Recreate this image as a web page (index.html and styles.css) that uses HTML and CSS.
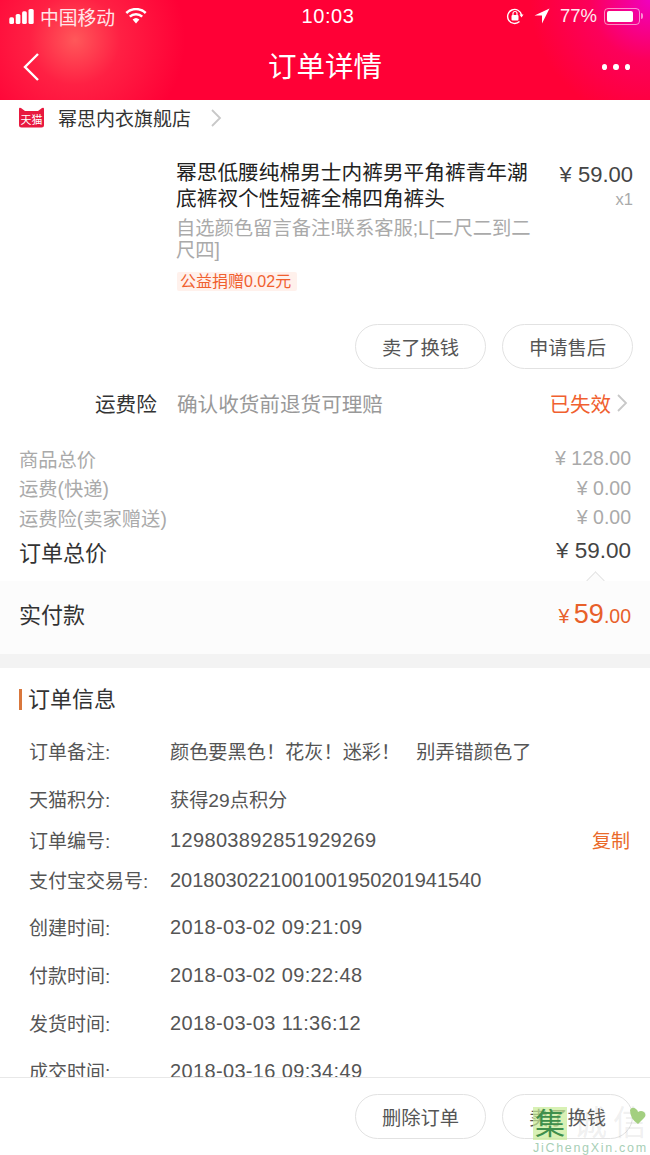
FILE: index.html
```html
<!DOCTYPE html>
<html lang="zh-CN">
<head>
<meta charset="utf-8">
<title>订单详情</title>
<link rel="stylesheet" href="styles.css">
</head>
<body>
<div class="app">
  <header class="header">
    <div class="status">
      <div class="status-left">
        <svg class="signal" width="25" height="15" viewBox="0 0 25 15"><rect x="0.300" y="8.300" width="4.700" height="6.700" rx="1.600" fill="#fff"/><rect x="6.700" y="5" width="4.700" height="10" rx="1.600" fill="#fff"/><rect x="13.100" y="2.300" width="4.700" height="12.700" rx="1.600" fill="#fff"/><rect x="19.500" y="0" width="5.200" height="15" rx="1.600" fill="#fff"/></svg>
        <span class="carrier">中国移动</span>
        <svg class="wifi" width="22" height="16" viewBox="0 0 22 16"><path d="M11 15.500 L7.600 11.500 A5 5 0 0 1 14.400 11.500 Z" fill="#fff"/><path d="M4.800 8.700 A9 9 0 0 1 17.200 8.700" fill="none" stroke="#fff" stroke-width="2.500"/><path d="M1.300 5 A14 14 0 0 1 20.700 5" fill="none" stroke="#fff" stroke-width="2.500"/></svg>
      </div>
      <span class="time">10:03</span>
      <div class="status-right">
        <svg class="lock" width="18" height="18" viewBox="0 0 18 18"><path d="M15.500 8 A7 7 0 1 0 13.500 14.500" fill="none" stroke="#fff" stroke-width="1.400"/><path d="M13.500 7.500 H17.500 L15.500 10.500 Z" fill="#fff"/><rect x="5.500" y="8" width="7" height="5.500" rx="1" fill="#fff"/><path d="M7 8 V6.500 A2 2 0 0 1 11 6.500 V8" fill="none" stroke="#fff" stroke-width="1.200"/></svg>
        <svg class="arrow" width="16" height="16" viewBox="0 0 16 16"><path d="M15.500 0.500 L0.500 7.500 H8 V15.500 Z" fill="#fff"/></svg>
        <span class="battery-text">77%</span>
        <div class="battery"><div class="battery-level"></div></div>
        <div class="battery-cap"></div>
      </div>
    </div>
    <div class="nav">
      <svg class="back" width="18" height="30" viewBox="0 0 18 30"><path d="M16 2 L3 15 L16 28" fill="none" stroke="#fff" stroke-width="2.400"/></svg>
      <h1 class="title">订单详情</h1>
      <div class="dots"><i></i><i></i><i></i></div>
    </div>
  </header>

  <main class="main">
    <div class="store">
      <svg class="tmall" width="25" height="21" viewBox="0 0 25 21"><path d="M0 2 Q0 0 2 1 L6 4 H19 L23 1 Q25 0 25 2 V18 Q25 20.500 22.500 20.500 H2.500 Q0 20.500 0 18 Z" fill="#e8193f"/><text x="12.500" y="16.500" text-anchor="middle" class="tmall-text">天猫</text></svg>
      <span class="store-name">幂思内衣旗舰店</span>
      <svg class="chev" width="12" height="20" viewBox="0 0 12 20"><path d="M2 2 L10 10 L2 18" fill="none" stroke="#c8c8c8" stroke-width="1.800"/></svg>
    </div>

    <section class="item">
      <div class="item-body">
        <div class="item-title">幂思低腰纯棉男士内裤男平角裤青年潮底裤衩个性短裤全棉四角裤头</div>
        <div class="item-sku">自选颜色留言备注!联系客服;L[二尺二到二尺四]</div>
        <span class="tag">公益捐赠0.02元</span>
      </div>
      <div class="item-price">
        <div class="price">¥ 59.00</div>
        <div class="qty">x1</div>
      </div>
    </section>

    <div class="actions">
      <button class="pill">卖了换钱</button>
      <button class="pill">申请售后</button>
    </div>

    <div class="insurance">
      <span class="ins-label">运费险</span>
      <span class="ins-desc">确认收货前退货可理赔</span>
      <span class="ins-state">已失效</span>
      <svg class="chev-sm" width="12" height="20" viewBox="0 0 12 20"><path d="M2 2 L10 10 L2 18" fill="none" stroke="#c8c8c8" stroke-width="1.800"/></svg>
    </div>

    <div class="costs">
      <div class="cost"><span>商品总价</span><span class="num">¥ 128.00</span></div>
      <div class="cost"><span>运费(快递)</span><span class="num">¥ 0.00</span></div>
      <div class="cost"><span>运费险(卖家赠送)</span><span class="num">¥ 0.00</span></div>
      <div class="cost total"><span>订单总价</span><span class="num">¥ 59.00</span></div>
    </div>

    <div class="paid">
      <span class="caret"></span>
      <span class="paid-label">实付款</span>
      <span class="paid-num"><small>¥</small> <b>59</b><small>.00</small></span>
    </div>

    <div class="divider"></div>

    <h2 class="info-head"><span>订单信息</span></h2>
    <dl class="info">
      <div class="row h-48"><dt>订单备注:</dt><dd>颜色要黑色！花灰！迷彩！&nbsp;&nbsp; 别弄错颜色了</dd></div>
      <div class="row h-48"><dt>天猫积分:</dt><dd>获得29点积分</dd></div>
      <div class="row h-34"><dt>订单编号:</dt><dd class="digits">129803892851929269</dd><a class="copy">复制</a></div>
      <div class="row h-46"><dt>支付宝交易号:</dt><dd class="digits long">2018030221001001950201941540</dd></div>
      <div class="row h-48"><dt>创建时间:</dt><dd class="digits">2018-03-02 09:21:09</dd></div>
      <div class="row h-48"><dt>付款时间:</dt><dd class="digits">2018-03-02 09:22:48</dd></div>
      <div class="row h-48"><dt>发货时间:</dt><dd class="digits">2018-03-03 11:36:12</dd></div>
      <div class="row h-48"><dt>成交时间:</dt><dd class="digits">2018-03-16 09:34:49</dd></div>
    </dl>
  </main>

  <footer class="footer">
    <button class="pill">删除订单</button>
    <button class="pill">卖了换钱</button>
  </footer>

  <div class="watermark">
    <div class="wm-top">
      <span class="wm-box">集</span>
      <span class="wm-ghost">诚</span>
      <span class="wm-ghost">信</span>
    </div>
    <div class="wm-url">JiChengXin.com</div>
    <svg class="wm-heart" width="18" height="18" viewBox="0 0 18 18"><path d="M1 3 Q3 -1 7 2 Q9 3.500 9 5 Q12 3 15 5 Q18 8 15 11 L9 17 Q1 12 1 3 Z" fill="#a3cf80"/></svg>
  </div>
</div>
</body>
</html>
```

FILE: styles.css
```css
* { box-sizing: border-box; margin: 0; padding: 0; }
html, body { width: 650px; height: 1155px; overflow: hidden; background: #fff; }
body {
  font-family: "Liberation Sans", "Noto Sans CJK SC", sans-serif;
  font-weight: 400;
  color: #333;
}
.app { position: relative; width: 650px; height: 1155px; display: flex; flex-direction: column; overflow: hidden; }

/* header */
.header {
  flex: none;
  height: 100px;
  color: #fff;
  background:
    radial-gradient(circle at 75px 40px, rgba(255,125,105,.7) 0, rgba(255,85,90,.38) 45px, rgba(255,0,54,0) 110px),
    radial-gradient(circle at 650px 0, rgba(240,0,190,1) 0, rgba(250,0,120,.55) 60px, rgba(255,0,54,0) 120px),
    #ff0036;
}
.status { display: flex; align-items: center; justify-content: space-between; height: 32px; padding: 0 7px 0 9px; position: relative; }
.status-left { display: flex; align-items: center; width: 260px; }
.signal { margin-right: 6px; }
.carrier { font-size: 18.800px; opacity: .88; }
.wifi { margin-left: 10px; }
.time { font-size: 20px; letter-spacing: .6px; margin-left: 4px; }
.status-right { display: flex; align-items: center; width: 260px; justify-content: flex-end; }
.lock { margin-right: 10px; }
.arrow { margin-right: 10px; }
.battery-text { font-size: 18.500px; margin-right: 7px; opacity: .92; }
.battery { width: 36px; height: 17px; border: 1px solid rgba(255,255,255,.55); border-radius: 4px; padding: 2px; }
.battery-level { width: 26px; height: 100%; background: #fff; border-radius: 2px; }
.battery-cap { width: 2px; height: 6px; margin-left: 1px; background: rgba(255,255,255,.55); border-radius: 0 2px 2px 0; }

.nav { display: flex; align-items: center; justify-content: space-between; height: 68px; padding: 2px 20px 0 22px; }
.back { display: block; margin-right: 8px; }
.title { font-size: 28.500px; font-weight: 400; line-height: 40px; }
.dots { display: flex; gap: 6px; width: 28px; }
.dots i { width: 6px; height: 6px; border-radius: 50%; background: #fff; }

/* main */
.main { flex: 1; min-height: 0; overflow: hidden; }
.store { display: flex; align-items: center; height: 35px; padding-left: 19px; }
.tmall { margin-right: 14px; flex: none; }
.tmall-text { font-size: 11px; fill: #fff; }
.store-name { font-size: 19px; color: #333; }
.chev { margin-left: 19px; }

.item { display: flex; padding: 25px 17px 0 176px; height: 189px; }
.item-body { width: 357px; flex: none; }
.item-title { font-size: 20.700px; line-height: 26px; color: #222; }
.item-sku { font-size: 19.300px; line-height: 22px; color: #aaa; margin-top: 6px; }
.tag { display: inline-block; margin: 10px 0 0 1px; font-size: 16px; line-height: 19px; color: #f0602f; background: #fff1ec; padding: 0 6px 0 3px; border-radius: 2px; }
.item-price { flex: 1; text-align: right; padding-top: 2px; }
.price { font-size: 22px; line-height: 26px; color: #444; white-space: nowrap; }
.qty { font-size: 16.500px; line-height: 22px; color: #aaa; }

.actions, .footer { display: flex; justify-content: flex-end; gap: 16px; padding-right: 17px; }
.actions { height: 46px; }
.pill { width: 131px; height: 45px; border: 1px solid #e2e2e2; border-radius: 23px; background: #fff; font: inherit; font-size: 19.300px; color: #555; }

.insurance { display: flex; align-items: center; height: 66px; padding: 0 22px 0 95px; }
.ins-label { font-size: 20.600px; color: #333; width: 82px; }
.ins-desc { font-size: 20.600px; color: #999; flex: 1; }
.ins-state { font-size: 20.500px; color: #f0602f; }
.chev-sm { margin-left: 5px; }

.costs { padding: 8px 19px 11px 19px; }
.cost { display: flex; justify-content: space-between; align-items: center; height: 29.500px; font-size: 19.300px; color: #aaa; }
.cost .num { font-size: 19.500px; }
.cost.total { height: 37px; font-size: 22px; color: #333; }
.cost.total .num { font-size: 22.500px; color: #444; }

.paid { position: relative; display: flex; justify-content: space-between; align-items: center; height: 73px; padding: 0 19px 5px; background: #fcfcfc; }
.caret { position: absolute; right: 48.500px; top: -6.500px; width: 13px; height: 13px; transform: rotate(45deg); border-left: 1px solid #e4e4e4; border-top: 1px solid #e4e4e4; background: #fcfcfc; }
.paid-label { font-size: 22px; color: #333; margin-bottom: 3px; }
.paid-num { color: #e8602a; }
.paid-num small { font-size: 19.500px; }
.paid-num b { font-size: 27px; font-weight: 400; }

.divider { height: 14px; background: #f3f3f3; }

.info-head { height: 59px; display: flex; align-items: center; padding: 5px 0 0 19px; font-weight: 400; font-size: 22px; color: #333; }
.info-head span { border-left: 3px solid #d9773c; padding-left: 6px; line-height: 21px; }
.info { padding: 0 20px 0 29px; }
.row { display: flex; align-items: center; font-size: 19px; line-height: 24px; }
.h-48 { height: 48px; }
.h-34 { height: 34px; }
.h-46 { height: 46px; }
.info dt { width: 141px; flex: none; color: #555; padding-top: 4px; }
.info dd { flex: 1; color: #555; font-size: 19.200px; padding-top: 4px; }
.info dd.digits { font-size: 20px; letter-spacing: .35px; padding-top: 0; }
.info dd.long { letter-spacing: 0; }
.copy { color: #ea6a2a; font-size: 19px; padding-top: 4px; }

/* footer */
.footer { flex: none; height: 78px; align-items: center; border-top: 1px solid #e8e8e8; background: #fff; }

/* watermark */
.watermark { position: absolute; right: 0; bottom: 0; width: 118px; height: 50px; padding-left: 1px; pointer-events: none; }
.wm-top { display: flex; align-items: center; height: 36px; gap: 6px; }
.wm-box { width: 34px; height: 33px; flex: none; background: rgba(200,235,150,.7); color: #3f8f4c; font-size: 30px; line-height: 33px; text-align: center; }
.wm-ghost { font-size: 34px; line-height: 36px; color: rgba(170,170,170,.18); }
.wm-url { font-size: 12.500px; line-height: 14px; letter-spacing: 1.700px; color: #a8cfb6; white-space: nowrap; }
.wm-heart { position: absolute; right: 3px; top: 2px; }
```
